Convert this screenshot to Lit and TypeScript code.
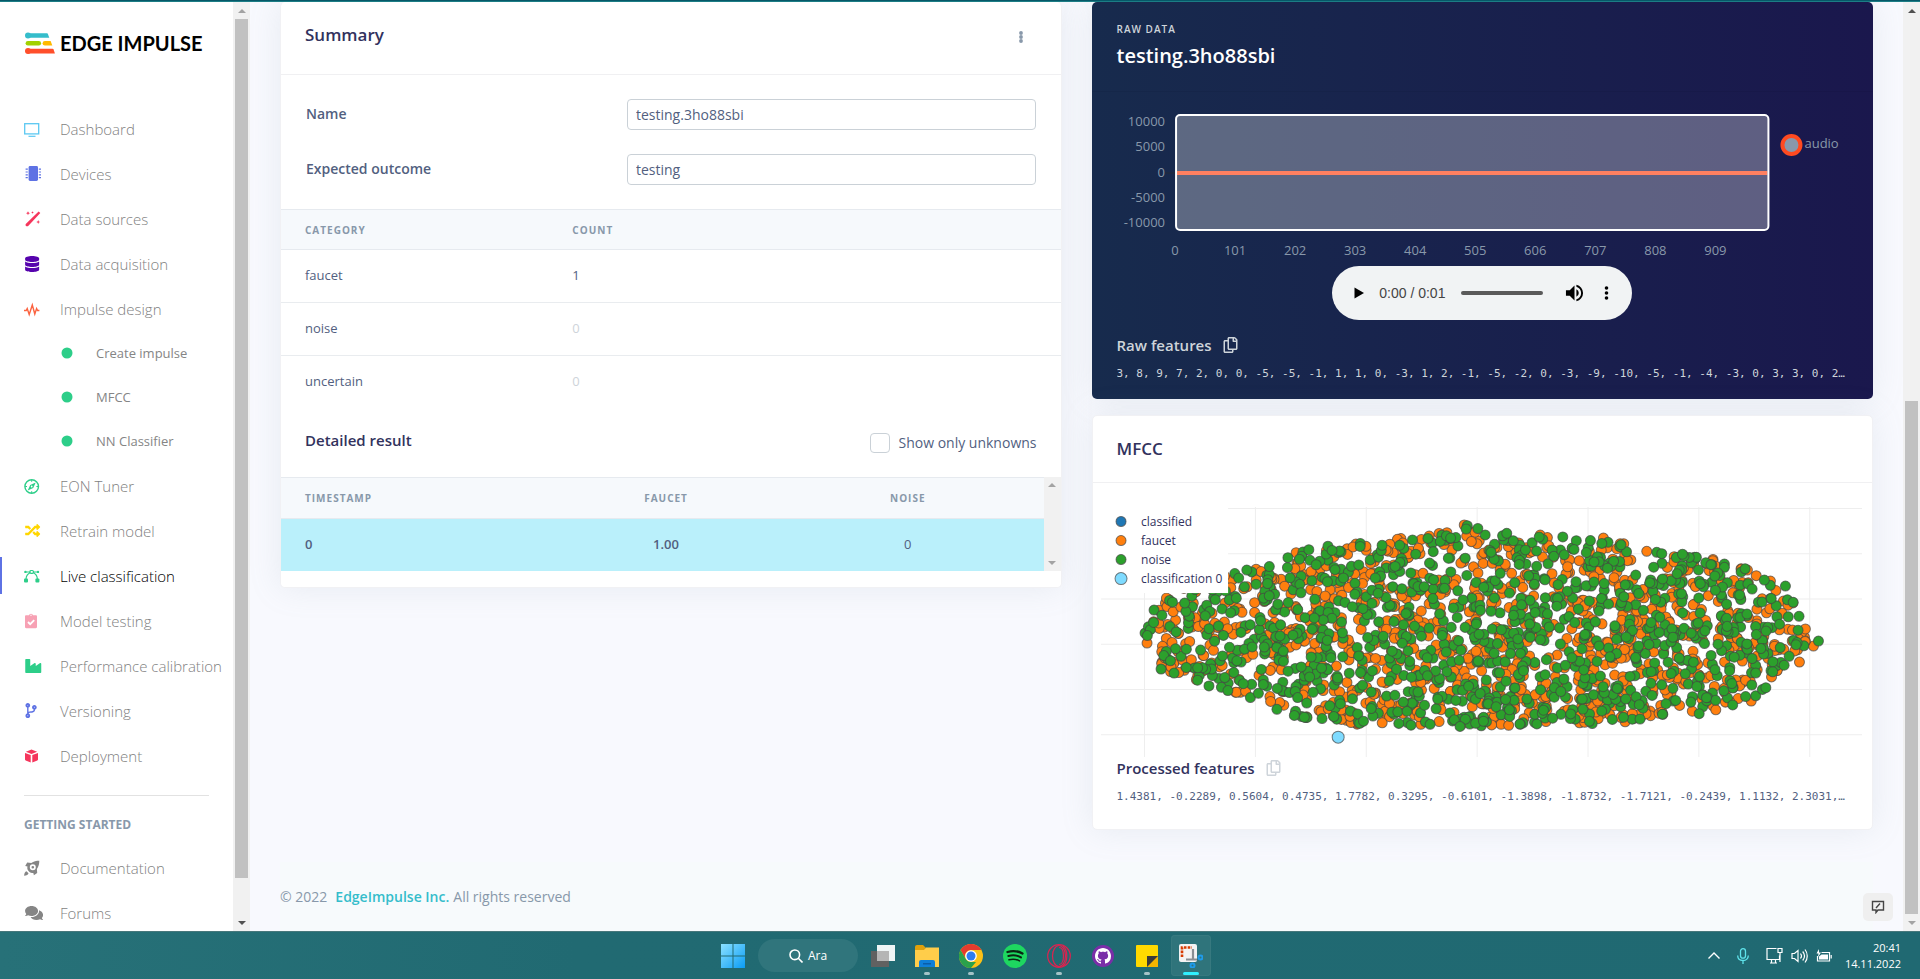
import { LitElement, html, svg, css } from "lit";
import { customElement, property } from "lit/decorators.js";
import { classMap } from "lit/directives/class-map.js";

const copyPath =
  "M433.941 65.941l-51.882-51.882A48 48 0 0 0 348.118 0H176c-26.51 0-48 21.49-48 48v48H48c-26.51 0-48 21.49-48 48v320c0 26.51 21.49 48 48 48h224c26.51 0 48-21.49 48-48v-48h80c26.51 0 48-21.49 48-48V99.882a48 48 0 0 0-14.059-33.941zM266 464H54a6 6 0 0 1-6-6V150a6 6 0 0 1 6-6h74v224c0 26.51 21.49 48 48 48h96v42a6 6 0 0 1-6 6zm128-96H182a6 6 0 0 1-6-6V54a6 6 0 0 1 6-6h106v88c0 13.255 10.745 24 24 24h88v202a6 6 0 0 1-6 6zm6-256h-64V48h9.632c1.591 0 3.117.632 4.243 1.757l48.368 48.368a6 6 0 0 1 1.757 4.243V112z";

const glyphs: Record<string, unknown> = {
  dashboard: svg`<svg width="16" height="16" viewBox="0 0 16 16" fill="none" stroke="#5bc8f2"><rect x=".7" y="2.7" width="14" height="10.2" stroke-width="1.3"/><path d="M4.5 15.3h7" stroke-width="1.2"/></svg>`,
  devices: svg`<svg width="18" height="16" viewBox="0 0 18 16" fill="#5e72e4"><rect x="4.6" y="0" width="9.4" height="15" rx="1.4"/><path d="M1.6 2.6h2.2v1.2H1.6zM1.6 5.4h2.2v1.2H1.6zM1.6 8.2h2.2v1.2H1.6zM1.6 11h2.2v1.2H1.6zM14.8 2.6H17v1.2h-2.2zM14.8 5.4H17v1.2h-2.2zM14.8 8.2H17v1.2h-2.2zM14.8 11H17v1.2h-2.2z"/></svg>`,
  sources: svg`<svg width="17" height="16" viewBox="0 0 17 16" fill="#f5365c"><path d="M14.6.4l1.7 1.7L4.2 14.9c-.6.6-1.6.6-2.2 0s-.6-1.600 0-2.200z"/><path d="M4 .2l.6 1.400L6 2.200l-1.400.6L4 4.200l-.6-1.400L2 2.200l1.400-.6zM8.500.2l.4.9.9.4-.9.4-.4.9-.4-.9-.9-.4.9-.4zM14.200 9l.6 1.400 1.400.6-1.400.6-.6 1.400-.6-1.400-1.400-.6 1.400-.6z"/></svg>`,
  database: svg`<svg width="16" height="16" viewBox="-36 0 512 512" fill="#5603ad"><path d="M448 73.143v45.714C448 159.143 347.667 192 224 192S0 159.143 0 118.857V73.143C0 32.857 100.333 0 224 0s224 32.857 224 73.143zM448 176v102.857C448 319.143 347.667 352 224 352S0 319.143 0 278.857V176c48.125 33.143 136.208 48.572 224 48.572S399.874 209.143 448 176zm0 160v102.857C448 479.143 347.667 512 224 512S0 479.143 0 438.857V336c48.125 33.143 136.208 48.572 224 48.572S399.874 369.143 448 336z"/></svg>`,
  pulse: svg`<svg width="16" height="16" viewBox="0 0 16 16" fill="none" stroke="#fb6340" stroke-width="1.400"><path d="M0 9.500h2.200l1-2 2 6L8.300 4l2.500 9 1.800-5.500 1 2h1.800"/></svg>`,
  compass: svg`<svg width="16" height="16" viewBox="0 0 16 16"><circle cx="7.700" cy="8.500" r="6.800" fill="none" stroke="#2dce89" stroke-width="1.400"/><path fill="#2dce89" fill-rule="evenodd" d="M11.700 4.500L9.200 10 3.700 12.500 6.200 7zM7.700 7.600a.9.9 0 1 0 0 1.800.9.9 0 1 0 0-1.800z"/><path stroke="#2dce89" d="M7.700 2v1.800M7.700 13.200V15M1.200 8.500H3M12.400 8.500h1.800"/></svg>`,
  shuffle: svg`<svg width="17" height="15" viewBox="-20 0 540 512" fill="#ffd600"><path d="M504.971 359.029c9.373 9.373 9.373 24.569 0 33.941l-80 79.984c-15.01 15.01-40.971 4.49-40.971-16.971V416h-58.785a12.004 12.004 0 0 1-8.773-3.812l-70.556-75.596 53.333-57.143L352 336h32v-39.981c0-21.438 25.943-31.998 40.971-16.971l80 79.981zM12 176h84l52.781 56.551 53.333-57.143-70.556-75.596A11.999 11.999 0 0 0 122.785 96H12c-6.627 0-12 5.373-12 12v56c0 6.627 5.373 12 12 12zm372 0v39.984c0 21.46 25.961 31.98 40.971 16.971l80-79.984c9.373-9.373 9.373-24.569 0-33.941l-80-79.981C409.943 24.021 384 34.582 384 56.019V96h-58.785a12.004 12.004 0 0 0-8.773 3.812L96 336H12c-6.627 0-12 5.373-12 12v56c0 6.627 5.373 12 12 12h110.785c3.326 0 6.503-1.381 8.773-3.812L352 176h32z"/></svg>`,
  vector: svg`<svg width="16" height="16" viewBox="0 0 16 16" fill="none" stroke="#2dce89" stroke-width="1.200"><rect x="6" y="2.500" width="3.400" height="2.800" rx="1"/><path d="M2 4h4M9.400 4h4M6 4.800C3.500 6 2.200 8.500 2 11M9.400 4.800c2.500 1.200 3.800 3.700 4 6.200"/><g fill="#2dce89" stroke="none"><circle cx="1.400" cy="3.900" r="1.200"/><circle cx="14" cy="3.900" r="1.200"/><rect x="0" y="10.600" width="4" height="4" rx="1"/><rect x="11.400" y="10.600" width="4" height="4" rx="1"/></g></svg>`,
  clipboard: svg`<svg width="16" height="16" viewBox="0 0 16 16"><path fill="#f7a1b4" d="M2.200 2.300h2.700a2.200 2.200 0 0 1 4.200 0h2.700c.7 0 1.200.5 1.200 1.200v10.600c0 .7-.5 1.200-1.200 1.200H2.200c-.7 0-1.200-.5-1.200-1.200V3.500c0-.7.5-1.200 1.200-1.200z"/><circle cx="7" cy="2.300" r=".7" fill="#fff"/><path d="M4 9l2.200 2.200 4-4" stroke="#fff" stroke-width="1.800" fill="none"/></svg>`,
  industry: svg`<svg width="18" height="16" viewBox="-40 0 576 512" fill="#2dce89"><path d="M475.115 163.781L336 252.309v-68.280c0-18.916-20.931-30.399-36.885-20.248L160 252.309V56c0-13.255-10.745-24-24-24H24C10.745 32 0 42.745 0 56v400c0 13.255 10.745 24 24 24h464c13.255 0 24-10.745 24-24V184.029c0-18.917-20.931-30.399-36.885-20.248z"/></svg>`,
  branch: svg`<svg width="15" height="15" viewBox="-50 0 512 512" fill="#5e72e4"><path d="M384 144c0-44.200-35.800-80-80-80s-80 35.800-80 80c0 36.400 24.300 67.100 57.500 76.800-.6 16.100-4.200 28.500-11 36.900-15.400 19.200-49.300 22.400-85.200 25.700-28.200 2.600-57.400 5.400-81.300 16.900v-144c32.500-10.200 56-40.500 56-76.300 0-44.200-35.800-80-80-80S0 35.800 0 80c0 35.800 23.500 66.100 56 76.300v199.300C23.500 365.900 0 396.200 0 432c0 44.200 35.800 80 80 80s80-35.800 80-80c0-34-21.200-63.100-51.200-74.600 3.100-5.200 7.800-9.800 14.900-13.400 16.200-8.200 40.400-10.400 66.100-12.800 42.200-3.900 90-8.400 118.200-43.400 14-17.400 21.100-39.800 21.600-67.900 31.600-10.800 54.400-40.700 54.400-75.900zM80 64c8.800 0 16 7.200 16 16s-7.200 16-16 16-16-7.200-16-16 7.200-16 16-16zm0 384c-8.800 0-16-7.200-16-16s7.200-16 16-16 16 7.200 16 16-7.200 16-16 16zm224-320c8.800 0 16 7.200 16 16s-7.200 16-16 16-16-7.200-16-16 7.200-16 16-16z"/></svg>`,
  box: svg`<svg width="16" height="16" viewBox="0 0 16 16" fill="#f5365c"><path d="M7.500 1.600l5.600 2.100-5.600 2.200-5.600-2.200zM1 4.900l5.700 2.200v7.400L1.700 12.400c-.4-.2-.7-.5-.7-1zM14 4.900L8.300 7.100v7.400l5-2.100c.4-.2.7-.5.7-1z"/></svg>`,
  rocket: svg`<svg width="16" height="16" viewBox="0 0 16 16" fill="#858585"><path fill-rule="evenodd" d="M15.300.8c-3 0-5.800.5-8 2.200L3.200 2.600 1.200 6l2.300.6c-.7 2 .2 4 2 5.500 1.400 1 2.600 1.200 3.800.8l.6 2.300 3.300-2.100-.3-4.200c1.800-2.200 2.400-5.100 2.400-8.100zM8.800 4.300a3 3 0 1 1 0 6 3 3 0 1 1 0-6zM8.800 6a1.300 1.300 0 1 0 0 2.600 1.300 1.300 0 1 0 0-2.600zM2.500 11.300c-1.500.4-2.200 2-2.400 4.500 2.500-.2 4.100-1 4.400-2.500z"/></svg>`,
  comments: svg`<svg width="19" height="16" viewBox="-34 0 608 512" fill="#858585"><path d="M416 192c0-88.400-93.100-160-208-160S0 103.600 0 192c0 34.300 14.100 65.900 38 92-13.400 30.200-35.500 54.200-35.800 54.500-2.200 2.300-2.800 5.700-1.500 8.700S4.800 352 8 352c36.600 0 66.900-12.300 88.700-25 32.200 15.700 70.300 25 111.300 25 114.900 0 208-71.600 208-160zm122 220c23.900-26 38-57.700 38-92 0-66.900-53.500-124.200-129.300-148.100.9 6.600 1.300 13.300 1.300 20.100 0 105.900-107.700 192-240 192-10.800 0-21.300-.8-31.700-1.900C207.800 439.600 281.800 480 368 480c41 0 79.100-9.200 111.300-25 21.800 12.700 52.100 25 88.700 25 3.200 0 6.100-1.900 7.300-4.800 1.300-2.900.7-6.300-1.500-8.700-.3-.2-22.400-24.200-35.800-54.500z"/></svg>`,
  dot: svg`<svg width="12" height="12" viewBox="0 0 12 12"><circle cx="6" cy="6" r="5.500" fill="#2dce89"/></svg>`,
};

interface NavItem {
  icon: string;
  label: string;
  sub?: boolean;
  active?: boolean;
}

const navItems: NavItem[] = [
  { icon: "dashboard", label: "Dashboard" },
  { icon: "devices", label: "Devices" },
  { icon: "sources", label: "Data sources" },
  { icon: "database", label: "Data acquisition" },
  { icon: "pulse", label: "Impulse design" },
  { icon: "dot", label: "Create impulse", sub: true },
  { icon: "dot", label: "MFCC", sub: true },
  { icon: "dot", label: "NN Classifier", sub: true },
  { icon: "compass", label: "EON Tuner" },
  { icon: "shuffle", label: "Retrain model" },
  { icon: "vector", label: "Live classification", active: true },
  { icon: "clipboard", label: "Model testing" },
  { icon: "industry", label: "Performance calibration" },
  { icon: "branch", label: "Versioning" },
  { icon: "box", label: "Deployment" },
];

const helpItems: NavItem[] = [
  { icon: "rocket", label: "Documentation" },
  { icon: "comments", label: "Forums" },
];

@customElement("scroll-rail")
class ScrollRail extends LitElement {
  @property({ type: Boolean }) top = false;
  @property({ type: Boolean }) bottom = false;
  @property({ type: Boolean }) bare = false;
  @property({ type: Number }) start = 0;
  @property({ type: Number }) size = 100;

  static styles = css`
    :host {
      display: grid;
      grid-template-rows: 17px 1fr 17px;
      width: 17px;
      background: #f1f1f1;
    }
    .arrow {
      display: block;
      margin: auto;
    }
    .track {
      display: flex;
      flex-direction: column;
      padding: 0 2px;
    }
    .thumb {
      background: #c1c1c1;
    }
  `;

  render() {
    const on = "#505050";
    const off = "#a3a3a3";
    return html`
      <svg class="arrow" width="8" height="4" viewBox="0 0 8 4"><path d="M4 0l4 4H0z" fill=${this.top ? on : off} /></svg>
      <div class="track">
        ${this.bare
          ? ""
          : html`<div style="flex:${this.start} 0 0"></div>
              <div class="thumb" style="flex:${this.size} 0 0"></div>
              <div style="flex:${100 - this.start - this.size} 0 0"></div>`}
      </div>
      <svg class="arrow" width="8" height="4" viewBox="0 0 8 4"><path d="M0 0h8L4 4z" fill=${this.bottom ? on : off} /></svg>
    `;
  }
}

@customElement("side-nav")
class SideNav extends LitElement {
  static styles = css`
    :host {
      display: flex;
      overflow: hidden;
      background: #fff;
      font-family: "Open Sans", sans-serif;
    }
    .body {
      flex: 1;
      min-width: 0;
    }
    .logo {
      display: flex;
      align-items: center;
      gap: 5px;
      padding: 26px 0 0 24px;
      height: 30px;
      color: #000;
      font: 700 20px/30px Lato, sans-serif;
      text-decoration: none;
      white-space: nowrap;
    }
    nav {
      padding-top: 48px;
    }
    .help {
      padding-top: 10px;
    }
    a.item {
      display: grid;
      grid-template-columns: 36px 1fr;
      align-items: center;
      height: 45px;
      padding-left: 24px;
      color: #7f7f7f;
      font-size: 15px;
      font-weight: 300;
      text-decoration: none;
      white-space: nowrap;
    }
    a.sub {
      grid-template-columns: 35px 1fr;
      height: 44px;
      padding-left: 61px;
      color: #858585;
      font-size: 13px;
      font-weight: 400;
    }
    a.active {
      color: #000;
      background: linear-gradient(#5e72e4, #5e72e4) left center / 2px 37px no-repeat;
    }
    .ico {
      display: flex;
    }
    hr {
      margin: 17px 24px 0;
      border: 0;
      border-top: 1px solid #e2e2e2;
    }
    h6 {
      margin: 19px 0 0 24px;
      color: #8898aa;
      font-size: 12px;
      line-height: 20px;
      font-weight: 700;
    }
  `;

  item(i: NavItem) {
    return html`<a class=${classMap({ item: true, sub: !!i.sub, active: !!i.active })} href="#"
      ><span class="ico">${glyphs[i.icon]}</span><span>${i.label}</span></a
    >`;
  }

  render() {
    return html`
      <div class="body">
        <a class="logo" href="#">
          <svg width="31" height="23" viewBox="0 0 31 23">
            <g fill="#35bdcb"><circle cx="4" cy="3.600" r="3"/><path d="M4 1.300h18.500c1 0 1.300.5 1.600 1.200l1.200 3.200H4z"/></g>
            <rect x="1.600" y="9" width="15.500" height="4.600" rx="2.300" fill="#a2d100"/>
            <path d="M20.900 9h5.700l1.700 4.600h-7.400a2.300 2.300 0 0 1 0-4.600z" fill="#ffb900"/>
            <g fill="#ff4f2b"><circle cx="4" cy="19" r="3"/><path d="M4 16.700h24.500c.6 0 .9.3 1.100.8l1.300 3.900H4z"/></g>
          </svg>
          <span>EDGE IMPULSE</span>
        </a>
        <nav aria-label="Project">${navItems.map((i) => this.item(i))}</nav>
        <hr />
        <h6>GETTING STARTED</h6>
        <nav class="help" aria-label="Help">${helpItems.map((i) => this.item(i))}</nav>
      </div>
      <scroll-rail bottom .start=${0} .size=${96}></scroll-rail>
    `;
  }
}

@customElement("summary-card")
class SummaryCard extends LitElement {
  static styles = css`
    :host {
      display: block;
      border: 1px solid #f1f1f4;
      border-top: 0;
      border-radius: 5px;
      overflow: hidden;
      background: #fff;
      color: #525f7f;
      font-family: "Open Sans", sans-serif;
      box-shadow: 0 0 32px rgba(136, 152, 170, 0.15);
    }
    header {
      display: flex;
      justify-content: space-between;
      align-items: flex-start;
      height: 33px;
      padding: 19px 24px 20px;
      border-bottom: 1px solid #f0f0f2;
    }
    h2,
    h3 {
      margin: 0;
      color: #32325d;
      font-weight: 600;
    }
    h2 {
      font-size: 17px;
      line-height: 27px;
    }
    h3 {
      margin-bottom: 5px;
      font-size: 15px;
      line-height: 24px;
    }
    .more {
      display: flex;
      padding: 10px 13px;
      border: 0;
      background: none;
    }
    form {
      display: grid;
      gap: 24px;
      padding: 24px 25px;
    }
    .row {
      display: grid;
      grid-template-columns: 11fr 14fr;
      align-items: center;
      font-size: 14px;
      font-weight: 600;
    }
    .row label {
      padding-bottom: 2px;
    }
    .row input {
      box-sizing: border-box;
      width: 100%;
      height: 31px;
      padding: 0 8px;
      border: 1px solid #cad1d7;
      border-radius: 4px;
      color: #525f7f;
      font: 400 14px "Open Sans", sans-serif;
    }
    table {
      width: 100%;
      border-collapse: collapse;
      table-layout: fixed;
      font-size: 13px;
    }
    th,
    td {
      box-sizing: border-box;
      padding: 0 24px;
      text-align: left;
    }
    th {
      height: 40px;
      border: solid #e6eaef;
      border-width: 1px 0;
      background: #f6f9fc;
      color: #8898aa;
      font-size: 10px;
      font-weight: 700;
      letter-spacing: 1px;
    }
    td {
      height: 53px;
      padding-bottom: 2px;
      border-bottom: 1px solid #e9ecef;
      font-weight: 400;
    }
    tr:last-child td {
      border: 0;
    }
    .w1 {
      width: 34.3%;
    }
    .zero {
      color: #ced4da;
    }
    .detail {
      display: flex;
      justify-content: space-between;
      align-items: center;
      height: 68px;
      padding: 0 24px;
    }
    .detail label {
      display: flex;
      align-items: center;
      gap: 8px;
      font-size: 14px;
    }
    .detail input {
      appearance: none;
      width: 20px;
      height: 20px;
      margin: 0;
      border: 1px solid #cad1d7;
      border-radius: 4px;
      background: #fff;
    }
    .list {
      display: flex;
      margin-bottom: 16px;
    }
    .list table {
      flex: 1;
    }
    .list th {
      height: 41px;
    }
    .list .num {
      text-align: center;
    }
    .list td {
      background: #baf0fb;
    }
    .list .strong {
      font-weight: 600;
    }
    .c1 {
      width: 36.6%;
    }
    .c2 {
      width: 27.8%;
    }
  `;

  render() {
    const counts: [string, number][] = [
      ["faucet", 1],
      ["noise", 0],
      ["uncertain", 0],
    ];
    return html`
      <header>
        <h2>Summary</h2>
        <button class="more" aria-label="More actions">
          <svg width="6" height="12" viewBox="0 0 6 12" fill="#8898aa"><circle cx="3" cy="2" r="1.900"/><circle cx="3" cy="6" r="1.900"/><circle cx="3" cy="10" r="1.900"/></svg>
        </button>
      </header>
      <form>
        <div class="row"><label for="name">Name</label><input id="name" value="testing.3ho88sbi" /></div>
        <div class="row"><label for="outcome">Expected outcome</label><input id="outcome" value="testing" /></div>
      </form>
      <table>
        <thead><tr><th class="w1">CATEGORY</th><th>COUNT</th></tr></thead>
        <tbody>
          ${counts.map(([k, n]) => html`<tr><td>${k}</td><td class=${n ? "" : "zero"}>${n}</td></tr>`)}
        </tbody>
      </table>
      <div class="detail">
        <h3>Detailed result</h3>
        <label for="unknowns"><input id="unknowns" type="checkbox" />Show only unknowns</label>
      </div>
      <div class="list">
        <table>
          <thead><tr><th class="c1">TIMESTAMP</th><th class="c2 num">FAUCET</th><th class="num">NOISE</th></tr></thead>
          <tbody><tr><td class="strong">0</td><td class="num strong">1.00</td><td class="num">0</td></tr></tbody>
        </table>
        <scroll-rail bare></scroll-rail>
      </div>
    `;
  }
}

@customElement("raw-card")
class RawCard extends LitElement {
  static styles = css`
    :host {
      display: block;
      border-radius: 5px;
      overflow: hidden;
      background: linear-gradient(87deg, #172b4d, #1a174d);
      color: #ced4da;
      font-family: "Open Sans", sans-serif;
      box-shadow: 0 0 32px rgba(136, 152, 170, 0.15);
    }
    header {
      padding: 20px 25px;
      border-bottom: 1px solid rgba(0, 0, 0, 0.05);
    }
    .over {
      font-size: 10px;
      line-height: 15px;
      font-weight: 600;
      letter-spacing: 1px;
    }
    h2 {
      margin: 6px 0 2px;
      color: #fff;
      font-size: 20px;
      line-height: 26px;
      font-weight: 600;
    }
    .chart {
      display: block;
      width: 100%;
      font-size: 13px;
    }
    .player {
      display: flex;
      align-items: center;
      box-sizing: border-box;
      width: 300px;
      height: 54px;
      margin: 0 auto;
      padding: 0 23px 0 20px;
      border-radius: 27px;
      background: #f1f3f4;
      color: #444;
      font: 14px "Liberation Sans", sans-serif;
    }
    .player button {
      display: flex;
      padding: 0;
      border: 0;
      background: none;
    }
    .time {
      margin-left: 14px;
    }
    .player input {
      appearance: none;
      flex: 1;
      min-width: 0;
      height: 4px;
      margin: 0 22px 0 16px;
      border-radius: 2px;
      background: #5a5a5a;
    }
    .player input::-webkit-slider-thumb {
      appearance: none;
      width: 0;
      height: 0;
    }
    .player .menu {
      margin-left: 20px;
    }
    footer {
      padding: 14px 25px 16px;
    }
    h3 {
      display: flex;
      align-items: center;
      gap: 11px;
      margin: 0 0 9px;
      font-size: 15px;
      line-height: 22px;
      font-weight: 600;
    }
    h3 button {
      display: flex;
      padding: 0;
      border: 0;
      background: none;
    }
    pre {
      margin: 0;
      overflow: hidden;
      font: 11px/18px "DejaVu Sans Mono", monospace;
    }
  `;

  render() {
    const ys: [string, number][] = [
      ["10000", 30],
      ["5000", 55],
      ["0", 81],
      ["-5000", 106],
      ["-10000", 131],
    ];
    return html`
      <header>
        <div class="over">RAW DATA</div>
        <h2>testing.3ho88sbi</h2>
      </header>
      <svg class="chart" viewBox="0 0 781 174" fill="#8898aa" role="img" aria-label="Raw audio signal">
        <path d="M73 81h10" stroke="#222a3a" />
        <rect x="84" y="23" width="592" height="115" rx="4" fill="#fff" fill-opacity=".3" />
        <path d="M85 81h590" stroke="#ff8060" stroke-width="4" />
        <rect x="84" y="23" width="592" height="115" rx="4" fill="none" stroke="#fff" stroke-width="2" />
        ${ys.map(([t, y]) => svg`<text x="73" y=${y + 4} text-anchor="end">${t}</text>`)}
        ${[0, 1, 2, 3, 4, 5, 6, 7, 8, 9].map(
          (n) => svg`<text x=${83 + n * 60} y="163" text-anchor="middle">${n * 101}</text>`
        )}
        <circle cx="699" cy="53" r="9" stroke="#ff4a20" stroke-width="4" />
        <text x="712" y="56">audio</text>
      </svg>
      <div class="player">
        <button aria-label="Play"><svg width="13" height="14" viewBox="0 0 13 14"><path d="M2.500 1.500L12 7l-9.500 5.500z" fill="#000"/></svg></button>
        <span class="time">0:00 / 0:01</span>
        <input type="range" min="0" max="1" value="0" aria-label="Seek" />
        <button aria-label="Mute">
          <svg width="19" height="18" viewBox="2 3 20 18"><path d="M3 9v6h4l5 5V4L7 9H3zm13.500 3A4.500 4.500 0 0 0 14 7.970v8.050A4.470 4.470 0 0 0 16.500 12zM14 3.230v2.060c2.890.86 5 3.540 5 6.710s-2.110 5.850-5 6.710v2.060A8.990 8.990 0 0 0 21 12a8.990 8.990 0 0 0-7-8.770z"/></svg>
        </button>
        <button class="menu" aria-label="Player options">
          <svg width="5" height="14" viewBox="0 0 5 14"><circle cx="2.500" cy="2" r="1.800"/><circle cx="2.500" cy="7" r="1.800"/><circle cx="2.500" cy="12" r="1.800"/></svg>
        </button>
      </div>
      <footer>
        <h3>Raw features<button aria-label="Copy raw features"><svg width="15" height="16" viewBox="0 0 448 512" fill="#ced4da"><path d=${copyPath} /></svg></button></h3>
        <pre>3, 8, 9, 7, 2, 0, 0, -5, -5, -1, 1, 1, 0, -3, 1, 2, -1, -5, -2, 0, -3, -9, -10, -5, -1, -4, -3, 0, 3, 3, 0, 2…</pre>
      </footer>
    `;
  }
}

const upper: [number, number][] = [
  [44, 124], [55, 102], [66, 86], [90, 76], [148, 60], [180, 50], [192, 43], [250, 36], [330, 28], [364, 17],
  [400, 24], [440, 28], [512, 29], [548, 40], [600, 49], [640, 58], [680, 80], [700, 100], [706, 128],
];
const lower: [number, number][] = [
  [44, 138], [60, 162], [86, 172], [132, 187], [176, 205], [212, 213], [254, 217], [334, 219], [400, 220],
  [460, 220], [486, 219], [540, 214], [608, 206], [650, 195], [666, 180], [684, 160], [706, 136],
];

const edgeAt = (pts: [number, number][], x: number) => {
  let i = 1;
  while (i < pts.length - 1 && pts[i][0] < x) i++;
  const [x0, y0] = pts[i - 1];
  const [x1, y1] = pts[i];
  return y0 + ((y1 - y0) * (x - x0)) / (x1 - x0);
};

const cloud = (count: number, seed: number, extra: [number, number][]) => {
  let s = seed;
  const rnd = () => {
    s = (s * 1664525 + 1013904223) % 4294967296;
    return s / 4294967296;
  };
  const out: [number, number][] = [...extra];
  while (out.length < count) {
    const x = 46 + rnd() * 658;
    const y = 16 + rnd() * 206;
    if (y > edgeAt(upper, x) && y < edgeAt(lower, x)) out.push([Math.round(x * 10) / 10, Math.round(y * 10) / 10]);
  }
  return out;
};

const faucetPoints = cloud(1050, 11, [[46, 136], [712, 139], [669, 74], [698, 155], [682, 94], [363, 18], [328, 29], [703, 130]]);
const noisePoints = cloud(1050, 77, [[44, 126], [717, 134], [684, 79], [60, 162], [623, 57], [53, 103], [73, 166], [363, 210]]);

@customElement("feature-card")
class FeatureCard extends LitElement {
  static styles = css`
    :host {
      display: block;
      border: 1px solid #f1f1f4;
      border-radius: 5px;
      background: #fff;
      font-family: "Open Sans", sans-serif;
      box-shadow: 0 0 32px rgba(136, 152, 170, 0.15);
    }
    header {
      padding: 19px 24px 20px;
      border-bottom: 1px solid #f0f0f2;
    }
    h2,
    h3 {
      margin: 0;
      color: #32325d;
      font-weight: 600;
    }
    h2 {
      font-size: 17px;
      line-height: 27px;
    }
    .plot {
      padding: 24px 10px 0 8px;
    }
    .plot svg {
      display: block;
      width: 100%;
      color: #32325d;
      font-size: 12px;
    }
    footer {
      padding: 0 24px 23px;
    }
    h3 {
      display: flex;
      align-items: center;
      gap: 11px;
      margin-bottom: 9px;
      font-size: 15px;
      line-height: 22px;
    }
    h3 button {
      display: flex;
      padding: 0;
      border: 0;
      background: none;
    }
    pre {
      margin: 0;
      overflow: hidden;
      color: #525f7f;
      font: 11px/18px "DejaVu Sans Mono", monospace;
    }
  `;

  render() {
    const legend: [string, string, number][] = [
      ["classified", "#1f77b4", 5],
      ["faucet", "#ff7f0e", 5],
      ["noise", "#2ca02c", 5],
      ["classification 0", "#7fdbff", 6],
    ];
    return html`
      <header><h2>MFCC</h2></header>
      <div class="plot">
        <svg viewBox="0 0 761 250" role="img" aria-label="Feature explorer">
          <g stroke="#eee">
            ${[0, 1, 2, 3, 4, 5, 6].map((n) => svg`<path d="M${43.500 + n * 110.800} 0v250" />`)}
            ${[0, 1, 2, 3, 4, 5].map((n) => svg`<path d="M0 ${1.500 + n * 45.200}h761" />`)}
          </g>
          <g stroke="#444" stroke-opacity=".7" stroke-width="1">
            <g fill="#ff7f0e">${faucetPoints.map(([x, y]) => svg`<circle cx=${x} cy=${y} r="5" />`)}</g>
            <g fill="#2ca02c">${noisePoints.map(([x, y]) => svg`<circle cx=${x} cy=${y} r="5" />`)}</g>
            <circle cx="237" cy="230" r="6" fill="#7fdbff" />
          </g>
          <rect width="127" height="86" fill="#fff" />
          ${legend.map(
            ([t, c, r], n) => svg`<circle cx="20" cy=${14.500 + n * 19} r=${r} fill=${c} stroke="#444" stroke-opacity=".7" />
              <text x="40" y=${19 + n * 19} fill="#32325d">${t}</text>`
          )}
        </svg>
      </div>
      <footer>
        <h3>Processed features<button aria-label="Copy processed features"><svg width="15" height="16" viewBox="0 0 448 512" fill="#ced4da"><path d=${copyPath} /></svg></button></h3>
        <pre>1.4381, -0.2289, 0.5604, 0.4735, 1.7782, 0.3295, -0.6101, -1.3898, -1.8732, -1.7121, -0.2439, 1.1132, 2.3031,…</pre>
      </footer>
    `;
  }
}

@customElement("task-bar")
class TaskBar extends LitElement {
  static styles = css`
    :host {
      display: grid;
      grid-template-columns: 1fr auto 1fr;
      align-items: center;
      box-sizing: border-box;
      border-top: 1px solid #47777b;
      background: linear-gradient(90deg, #277178, #216a72 30%, #206972);
      color: #fff;
      font: 12px/16px "Open Sans", sans-serif;
    }
    button {
      padding: 0;
      border: 0;
      background: none;
      color: inherit;
      font: inherit;
    }
    .center {
      grid-column: 2;
      display: flex;
      align-items: center;
      padding-left: 12px;
    }
    .start {
      display: flex;
      width: 24px;
      margin-right: 13px;
    }
    .search {
      display: flex;
      align-items: center;
      justify-content: center;
      gap: 5px;
      width: 100px;
      height: 33px;
      margin-right: 5px;
      border-radius: 17px;
      background: #30757c;
    }
    .apps {
      display: grid;
      grid-template-columns: repeat(8, 40px);
      gap: 4px;
      height: 41px;
    }
    .app {
      position: relative;
      display: flex;
      align-items: center;
      justify-content: center;
    }
    .run::after {
      content: "";
      position: absolute;
      bottom: 1px;
      left: 50%;
      width: 6px;
      height: 3px;
      margin-left: -3px;
      border-radius: 2px;
      background: #a4c3c7;
    }
    .on {
      border-radius: 4px;
      box-shadow: inset 0 0 0 1px #37797f;
      background: #2f747b;
    }
    .on::after {
      width: 16px;
      margin-left: -8px;
      background: #2ff0ff;
    }
    .tray {
      display: flex;
      align-items: center;
      justify-content: flex-end;
      padding-right: 19px;
    }
    .tray svg {
      fill: none;
      stroke: #fff;
      margin-right: 8px;
    }
    .tray .chev,
    .tray .mic {
      margin-right: 17px;
    }
    .clock {
      width: 61px;
      font-size: 11px;
      text-align: right;
      white-space: nowrap;
    }
  `;

  render() {
    return html`
      <div class="center">
        <button class="start" aria-label="Start">
          <svg width="24" height="24" viewBox="0 0 24 24">
            <defs><linearGradient id="w" x1="0" y1="0" x2="1" y2="1"><stop offset="0" stop-color="#8be1ff"/><stop offset="1" stop-color="#0a9cf5"/></linearGradient></defs>
            <path fill="url(#w)" d="M0 0h11.500v11.500H0zM12.500 0H24v11.500H12.500zM0 12.500h11.500V24H0zM12.500 12.500H24V24H12.500z"/>
          </svg>
        </button>
        <button class="search">
          <svg width="14" height="14" viewBox="0 0 14 14" fill="none" stroke="#fff" stroke-width="1.600"><circle cx="5.800" cy="5.800" r="4.800"/><path d="M9.300 9.300L13.500 13.500"/></svg>
          <span>Ara</span>
        </button>
        <div class="apps">
          <button class="app" aria-label="Task view">
            <svg width="24" height="24" viewBox="0 0 24 24"><path fill="#fff" opacity=".93" d="M6 1h18v16H6z"/><path fill="#616161" d="M0 7h18v16H0z"/><path fill="#b5b5b5" d="M6 7h12v10H6z"/></svg>
          </button>
          <button class="app run" aria-label="File Explorer">
            <svg width="24" height="24" viewBox="0 0 24 24"><path d="M0 3a2 2 0 0 1 2-2h6l2.500 2.500V8H0z" fill="#e0a10b"/><path d="M0 6h9l2-2.500h13V23H0z" fill="#ffcd4a"/><path d="M4 23v-5a2 2 0 0 1 2-2h12a2 2 0 0 1 2 2v5z" fill="#0f7fd8"/><path d="M8 19h8v1.500H8z" fill="#0a5da8"/></svg>
          </button>
          <button class="app run" aria-label="Chrome">
            <svg width="24" height="24" viewBox="0 0 24 24"><circle cx="12" cy="12" r="12" fill="#fbc116"/><path d="M1.600 6A12 12 0 0 1 22.400 6H12a6 6 0 0 0-5.200 9z" fill="#e33b2e"/><path d="M1.600 6l5.200 9A6 6 0 0 0 12 18h5l-5 6A12 12 0 0 1 1.600 6z" fill="#2aa14b"/><circle cx="12" cy="12" r="5.800" fill="#fff"/><circle cx="12" cy="12" r="4.500" fill="#2d7cf0"/></svg>
          </button>
          <button class="app" aria-label="Spotify">
            <svg width="24" height="24" viewBox="0 0 24 24"><circle cx="12" cy="12" r="12" fill="#1ed760"/><g fill="none" stroke="#0b2413" stroke-linecap="round"><path d="M4.500 8c5-1.500 10.500-1 15 1.500" stroke-width="2.300"/><path d="M5.300 12c4.400-1.200 9-.8 12.700 1.400" stroke-width="1.900"/><path d="M6 15.700c3.700-.9 7.400-.6 10.500 1.200" stroke-width="1.600"/></g></svg>
          </button>
          <button class="app run" aria-label="Opera GX">
            <svg width="24" height="24" viewBox="0 0 24 24" fill="none" stroke="#dc2350" stroke-width="1.200"><circle cx="12" cy="12" r="11.300"/><ellipse cx="12" cy="12" rx="6.500" ry="10.500"/><path d="M12 3.500c2.800 0 4.500 3.600 4.500 8.500s-1.700 8.500-4.500 8.500M16 2c3 2.500 3.800 6 3.800 10S19 19.500 16 22"/></svg>
          </button>
          <button class="app" aria-label="GitHub">
            <svg width="22" height="22" viewBox="0 0 22 22"><circle cx="11" cy="11" r="11" fill="#7a2ea8"/><path transform="translate(3 3)" fill="#fff" d="M8 0C3.580 0 0 3.580 0 8c0 3.540 2.290 6.530 5.470 7.590.4.070.55-.17.55-.38 0-.19-.01-.82-.01-1.490-2.010.37-2.530-.49-2.690-.94-.09-.23-.48-.94-.82-1.130-.28-.15-.68-.52-.01-.53.63-.01 1.080.58 1.230.82.72 1.210 1.870.87 2.330.66.07-.52.28-.87.51-1.070-1.780-.2-3.640-.89-3.640-3.950 0-.87.31-1.590.82-2.150-.08-.2-.36-1.020.08-2.120 0 0 .67-.21 2.200.82.64-.18 1.320-.27 2-.27.68 0 1.360.09 2 .27 1.530-1.040 2.200-.82 2.200-.82.44 1.100.16 1.920.08 2.120.51.56.82 1.270.82 2.150 0 3.070-1.870 3.750-3.650 3.950.29.25.54.73.54 1.480 0 1.070-.01 1.930-.01 2.200 0 .21.15.46.55.38A8.013 8.013 0 0 0 16 8c0-4.420-3.580-8-8-8z"/></svg>
          </button>
          <button class="app run" aria-label="Sticky Notes">
            <svg width="22" height="22" viewBox="0 0 22 22"><rect width="22" height="22" rx="1" fill="#ffd900"/><path d="M11 11h11v11H11z" fill="#f5b400"/><path d="M11 11h11L11 22z" fill="#3b3a3a"/></svg>
          </button>
          <button class="app run on" aria-label="Snipping Tool">
            <svg width="24" height="24" viewBox="0 0 24 24"><rect x="0" y="0" width="18" height="18" rx="2" fill="#f3f3f3"/><path d="M3 13V3.500h10" fill="none" stroke="#d83b01" stroke-width="2.600" stroke-dasharray="2.600 1.200"/><path d="M14 5v10M7 15.500h11" stroke="#8a8f94" stroke-width="2.200"/><g fill="none" stroke="#1f9bea" stroke-width="2"><circle cx="13.500" cy="21.500" r="2"/><circle cx="21.500" cy="13.500" r="2"/></g></svg>
          </button>
        </div>
      </div>
      <div class="tray">
        <svg class="chev" width="12" height="12" viewBox="0 0 12 12" stroke-width="1.400"><path d="M.5 8.500L6 3l5.500 5.500"/></svg>
        <svg class="mic" style="stroke:#5fe3ea" width="12" height="16" viewBox="0 0 12 16" stroke-width="1.300"><rect x="3.500" y=".7" width="5" height="9.500" rx="2.500"/><path d="M.7 7.500c0 3 2 5 5.300 5s5.300-2 5.300-5M6 12.500V16"/></svg>
        <svg width="17" height="17" viewBox="0 0 17 17" stroke-width="1.200"><path d="M10.500 1.500H1v11h12.500V8.500M4 16h7M5.500 12.500V16M9.500 12.500V16M12 1.500h4v4h-4zM14 5.500V15"/></svg>
        <svg width="17" height="16" viewBox="0 0 17 16" stroke-width="1.200"><path d="M1 5.500h2.500L7 2.500v11l-3.500-3H1zM9.500 5.500c1.200 1.500 1.200 3.500 0 5M11.700 3.500c2.200 2.700 2.200 6.300 0 9M14 1.500c3 3.800 3 9.200 0 13"/></svg>
        <svg width="16" height="14" viewBox="0 0 16 14" stroke-width="1.200"><path d="M5.500 3.500h8v8.500h-12V7M15.200 6v3.500"/><path fill="#fff" stroke="none" d="M3 10.500V7.500l2.500-2h6.500v5zM3 0L.5 4.500h2L2 8l3-4.500H3z"/></svg>
        <div class="clock">20:41<br />14.11.2022</div>
      </div>
    `;
  }
}

@customElement("app-root")
class AppRoot extends LitElement {
  static styles = css`
    :host {
      display: grid;
      grid-template: 2px minmax(0, 1fr) 48px / 250px minmax(0, 1fr) 17px;
      height: 100vh;
      overflow: hidden;
      background: #f8f9fe;
      font-family: "Open Sans", sans-serif;
    }
    .strip {
      grid-column: 1 / -1;
      background: linear-gradient(#065868 50%, #1c7d85 50%);
    }
    main {
      position: relative;
      display: flex;
      flex-direction: column;
      overflow: hidden;
      padding: 0 30px;
    }
    .columns {
      display: grid;
      grid-template-columns: 1fr 1fr;
      gap: 30px;
      align-items: start;
    }
    .stack {
      display: grid;
      gap: 16px;
      min-width: 0;
    }
    footer {
      display: flex;
      align-items: center;
      flex: 1;
      margin-top: 32px;
      background: #f7fafc;
      color: #8898aa;
      font-size: 14px;
    }
    footer a {
      margin: 0 4px 0 8px;
      color: #35bdcb;
      font-weight: 600;
      text-decoration: none;
    }
    .feedback {
      position: absolute;
      right: 10px;
      bottom: 10px;
      display: flex;
      align-items: center;
      justify-content: center;
      width: 30px;
      height: 28px;
      padding: 0;
      border: 0;
      border-radius: 5px;
      background: #efefef;
    }
    task-bar {
      grid-column: 1 / -1;
    }
  `;

  render() {
    return html`
      <div class="strip"></div>
      <side-nav></side-nav>
      <main>
        <div class="columns">
          <summary-card></summary-card>
          <div class="stack">
            <raw-card></raw-card>
            <feature-card></feature-card>
          </div>
        </div>
        <footer>© 2022 <a href="#">EdgeImpulse Inc.</a> All rights reserved</footer>
        <button class="feedback" aria-label="Feedback">
          <svg width="14" height="14" viewBox="0 0 14 14" fill="none" stroke="#444" stroke-width="1.400"><path d="M1.500 1.500h11v8.500H7L5 12.500V10H1.500zM5 8l4-4.500"/></svg>
        </button>
      </main>
      <scroll-rail top .start=${42.700} .size=${57.300}></scroll-rail>
      <task-bar></task-bar>
    `;
  }
}
